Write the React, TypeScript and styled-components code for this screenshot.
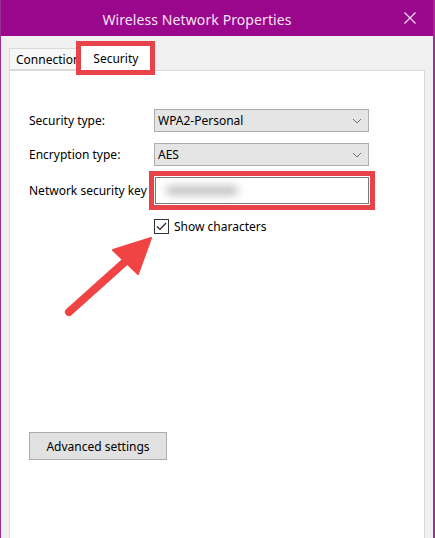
import styled, { createGlobalStyle } from 'styled-components';

const GlobalStyle = createGlobalStyle`
    html, body {
        margin: 0;
        padding: 0;
        background: #ffffff;
    }
    body {
        font-family: "Noto Sans", "Open Sans", sans-serif;
        font-size: 12px;
        color: #000;
    }
`;

const Window = styled.div`
    position: relative;
    width: 435px;
    height: 538px;
    box-sizing: border-box;
    border-left: 1px solid #9b2f93;
    border-right: 2px solid #9b2f93;
    background: #f0f0f0;
    display: flex;
    flex-direction: column;
    overflow: hidden;
`;

const TitleBar = styled.div`
    height: 36px;
    flex-shrink: 0;
    background: #9a068c;
    display: flex;
    align-items: center;
`;

const Title = styled.div`
    flex: 1;
    text-align: center;
    padding-left: 6px;
    padding-top: 2px;
    color: #f6e4f3;
    font-size: 14px;
    letter-spacing: 0.1px;
`;

const CloseButton = styled.div`
    width: 46px;
    height: 36px;
    display: flex;
    align-items: center;
    justify-content: center;
`;

const Body = styled.div`
    flex: 1;
    display: flex;
    flex-direction: column;
    padding: 9px 8px 0 8px;
`;

const TabStrip = styled.div`
    display: flex;
    align-items: flex-end;
    height: 25px;
    position: relative;
    z-index: 1;
`;

const Tab = styled.div<{ $selected?: boolean; $marked?: boolean }>`
    box-sizing: border-box;
    height: ${p => (p.$selected ? '26px' : '22px')};
    padding: 0 ${p => (p.$selected ? '12px' : '6px')};
    margin-bottom: ${p => (p.$selected ? '-1px' : '0')};
    margin-left: ${p => (p.$selected ? '-7px' : '0')};
    display: flex;
    align-items: center;
    background: ${p => (p.$selected ? '#ffffff' : '#f7f7f7')};
    border: 1px solid #d9d9d9;
    border-bottom: ${p => (p.$selected ? 'none' : '1px solid #d9d9d9')};
    font-size: 12px;
    outline: ${p => (p.$marked ? '5px solid #e8434b' : 'none')};
    outline-offset: -1px;
    position: relative;
    z-index: ${p => (p.$selected ? 2 : 1)};
`;

const Panel = styled.div`
    flex: 1;
    background: #ffffff;
    border: 1px solid #d9d9d9;
    border-bottom: none;
    padding: 38px 19px 0 19px;
    display: flex;
    flex-direction: column;
`;

const FieldRow = styled.div<{ $gap?: number }>`
    display: grid;
    grid-template-columns: 125px 215px;
    align-items: center;
    margin-bottom: ${p => p.$gap ?? 11}px;
`;

const Label = styled.div`
    font-size: 12px;
    white-space: nowrap;
`;

const Select = styled.div`
    box-sizing: border-box;
    height: 23px;
    background: #e5e5e5;
    border: 1px solid #adadad;
    display: flex;
    align-items: center;
    justify-content: space-between;
    padding: 0 6px 0 3px;
    font-size: 12px;
`;

const KeyInput = styled.div`
    box-sizing: border-box;
    height: 27px;
    background: #ffffff;
    border: 1px solid #7a7a7a;
    display: flex;
    align-items: center;
    padding-left: 10px;
    outline: 5px solid #e8434b;
    outline-offset: 1px;
    margin-left: 1px;
`;

const BlurredKey = styled.span`
    display: block;
    width: 72px;
    height: 9px;
    background: #bdbdbd;
    border-radius: 5px;
    filter: blur(4px);
`;

const CheckRow = styled.div`
    display: flex;
    align-items: center;
    gap: 5px;
    margin-left: 125px;
    margin-top: 14px;
`;

const CheckBox = styled.div`
    box-sizing: border-box;
    width: 15px;
    height: 15px;
    border: 1px solid #333333;
    background: #ffffff;
    display: flex;
    align-items: center;
    justify-content: center;
`;

const Button = styled.div`
    box-sizing: border-box;
    width: 138px;
    height: 28px;
    margin-top: 197px;
    background: #e1e1e1;
    border: 1px solid #adadad;
    display: flex;
    align-items: center;
    justify-content: center;
    font-size: 12px;
`;

const Arrow = styled.svg`
    position: absolute;
    left: 60px;
    top: 230px;
    pointer-events: none;
`;

const Chevron = () => (
    <svg width="10" height="6" viewBox="0 0 10 6">
        <path d="M1 1 L5 5 L9 1" fill="none" stroke="#6d6d6d" strokeWidth="1" />
    </svg>
);

const App = () => (
    <>
        <GlobalStyle />
        <Window>
            <TitleBar>
                <Title>Wireless Network Properties</Title>
                <CloseButton>
                    <svg width="12" height="12" viewBox="0 0 12 12">
                        <path d="M0.5 0.5 L11.5 11.5 M11.5 0.5 L0.5 11.5" stroke="#f6e4f3" strokeWidth="1.2" />
                    </svg>
                </CloseButton>
            </TitleBar>
            <Body>
                <TabStrip>
                    <Tab>Connection</Tab>
                    <Tab $selected $marked>Security</Tab>
                </TabStrip>
                <Panel>
                    <FieldRow>
                        <Label>Security type:</Label>
                        <Select>
                            WPA2-Personal
                            <Chevron />
                        </Select>
                    </FieldRow>
                    <FieldRow>
                        <Label>Encryption type:</Label>
                        <Select>
                            AES
                            <Chevron />
                        </Select>
                    </FieldRow>
                    <FieldRow $gap={0}>
                        <Label>Network security key</Label>
                        <KeyInput>
                            <BlurredKey />
                        </KeyInput>
                    </FieldRow>
                    <CheckRow>
                        <CheckBox>
                            <svg width="11" height="9" viewBox="0 0 11 9">
                                <path d="M1 4.5 L4 7.5 L10 1" fill="none" stroke="#222" strokeWidth="1.2" />
                            </svg>
                        </CheckBox>
                        <Label>Show characters</Label>
                    </CheckRow>
                    <Button>Advanced settings</Button>
                </Panel>
            </Body>
            <Arrow width="100" height="95" viewBox="0 0 100 95">
                <line x1="8" y1="82" x2="66" y2="30" stroke="#f04444" strokeWidth="8" strokeLinecap="round" />
                <polygon points="90,8 52,20 77,44" fill="#f04444" stroke="#f04444" strokeWidth="2" strokeLinejoin="round" />
            </Arrow>
        </Window>
    </>
);

export default App;
